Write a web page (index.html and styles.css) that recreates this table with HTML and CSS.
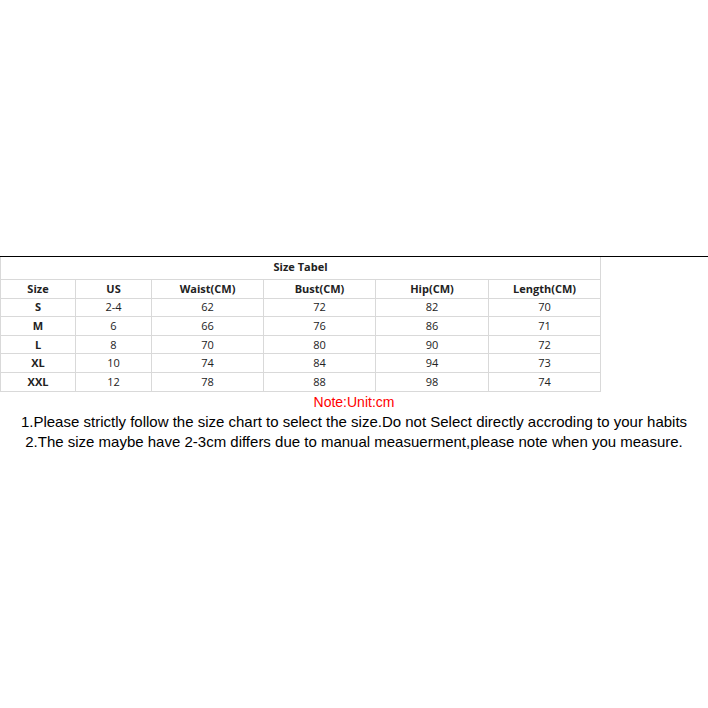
FILE: index.html
```html
<!DOCTYPE html>
<html>
<head>
<meta charset="utf-8">
<link rel="stylesheet" href="styles.css">
</head>
<body>
<div class="page">
  <div class="sheet">
    <table class="size-table">
      <colgroup>
        <col class="c1"><col class="c2"><col class="c3"><col class="c4"><col class="c5"><col class="c6">
      </colgroup>
      <tr class="title-row"><td colspan="6">Size Tabel</td></tr>
      <tr class="head-row"><td>Size</td><td>US</td><td>Waist(CM)</td><td>Bust(CM)</td><td>Hip(CM)</td><td>Length(CM)</td></tr>
      <tr><td class="sz">S</td><td>2-4</td><td>62</td><td>72</td><td>82</td><td>70</td></tr>
      <tr><td class="sz">M</td><td>6</td><td>66</td><td>76</td><td>86</td><td>71</td></tr>
      <tr><td class="sz">L</td><td>8</td><td>70</td><td>80</td><td>90</td><td>72</td></tr>
      <tr><td class="sz">XL</td><td>10</td><td>74</td><td>84</td><td>94</td><td>73</td></tr>
      <tr><td class="sz">XXL</td><td>12</td><td>78</td><td>88</td><td>98</td><td>74</td></tr>
    </table>
    <div class="notes">
      <p class="note">Note:Unit:cm</p>
      <p class="line">1.Please strictly follow the size chart to select the size.Do not Select directly accroding to your habits</p>
      <p class="line">2.The size maybe have 2-3cm differs due to manual measuerment,please note when you measure.</p>
    </div>
  </div>
</div>
</body>
</html>
```
FILE: styles.css
```css
html, body {
  margin: 0;
  padding: 0;
  background: #fff;
}
.page {
  width: 708px;
  height: 708px;
  padding-top: 256px;
  box-sizing: border-box;
}
.sheet {
  border-top: 1px solid #000;
}
.size-table {
  border-collapse: collapse;
  width: 601px;
  table-layout: fixed;
  font-family: "Open Sans", sans-serif;
  font-size: 11px;
  color: #222;
}
.c1 { width: 75px; }
.c2 { width: 76px; }
.c3 { width: 112px; }
.c4 { width: 112px; }
.c5 { width: 113px; }
.c6 { width: 112px; }
.size-table td {
  border: 1px solid #d9d9d9;
  text-align: center;
  padding: 0;
  height: 17.6px;
  line-height: 16px;
}
.size-table tr:first-child td {
  border-top: none;
}
.title-row td {
  height: 20px;
  font-weight: bold;
  padding-bottom: 2px;
}
.head-row td, .size-table td.sz {
  font-weight: bold;
}
.notes {
  font-family: "Liberation Sans", Arial, sans-serif;
  text-align: center;
  color: #000;
}
.notes p {
  margin: 0;
}
.note {
  color: #ff0000;
  font-size: 14px;
  line-height: 20px;
}
.line {
  font-size: 15px;
  line-height: 20px;
}
```
